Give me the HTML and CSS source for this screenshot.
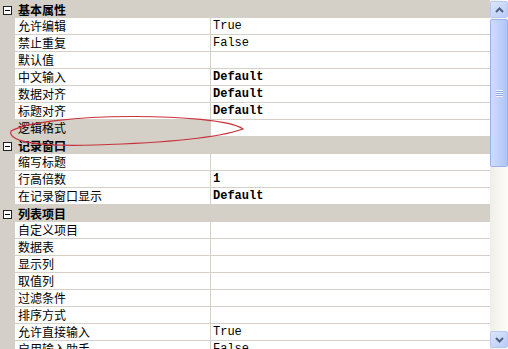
FILE: index.html
```html
<!DOCTYPE html>
<html lang="zh-CN">
<head>
  <meta charset="UTF-8" />
  <title>属性</title>
  <link rel="stylesheet" href="styles.css">
</head>
<body>
  <div class="frame">
    <div class="grid">
      <!-- 基本属性 -->
      <div class="row category"><span class="toggle"></span><span class="cat-name">基本属性</span></div>
      <div class="row"><span class="name">允许编辑</span><span class="value">True</span></div>
      <div class="row"><span class="name">禁止重复</span><span class="value">False</span></div>
      <div class="row"><span class="name">默认值</span><span class="value"></span></div>
      <div class="row"><span class="name">中文输入</span><span class="value bold">Default</span></div>
      <div class="row"><span class="name">数据对齐</span><span class="value bold">Default</span></div>
      <div class="row"><span class="name">标题对齐</span><span class="value bold">Default</span></div>
      <div class="row"><span class="name selected">逻辑格式</span><span class="value"></span></div>

      <!-- 记录窗口 -->
      <div class="row category"><span class="toggle"></span><span class="cat-name">记录窗口</span></div>
      <div class="row"><span class="name">缩写标题</span><span class="value"></span></div>
      <div class="row"><span class="name">行高倍数</span><span class="value bold">1</span></div>
      <div class="row"><span class="name">在记录窗口显示</span><span class="value bold">Default</span></div>

      <!-- 列表项目 -->
      <div class="row category"><span class="toggle"></span><span class="cat-name">列表项目</span></div>
      <div class="row"><span class="name">自定义项目</span><span class="value"></span></div>
      <div class="row"><span class="name">数据表</span><span class="value"></span></div>
      <div class="row"><span class="name">显示列</span><span class="value"></span></div>
      <div class="row"><span class="name">取值列</span><span class="value"></span></div>
      <div class="row"><span class="name">过滤条件</span><span class="value"></span></div>
      <div class="row"><span class="name">排序方式</span><span class="value"></span></div>
      <div class="row"><span class="name">允许直接输入</span><span class="value">True</span></div>
      <div class="row"><span class="name">启用输入助手</span><span class="value">False</span></div>
    </div>

    <div class="scrollbar">
      <div class="sb-btn">
        <svg width="9" height="6" viewBox="0 0 9 6"><path d="M1 5 L4.5 1.5 L8 5" fill="none" stroke="#4d6185" stroke-width="2"/></svg>
      </div>
      <div class="sb-thumb"><span class="grip"></span></div>
      <div class="sb-track"></div>
      <div class="sb-btn">
        <svg width="9" height="6" viewBox="0 0 9 6"><path d="M1 1 L4.5 4.5 L8 1" fill="none" stroke="#4d6185" stroke-width="2"/></svg>
      </div>
    </div>

    <!-- red annotation ring -->
    <svg class="mark" width="260" height="40" viewBox="0 110 260 40">
      <path d="M243 129 C218 112 45 112 11 131 C8 140 30 147 95 145 C160 143 215 139 243 129 Z"
            fill="none" stroke="#c8323c" stroke-width="1.2"/>
    </svg>
  </div>
</body>
</html>
```

FILE: styles.css
```css
body {
  margin: 0;
  background: #fff;
}
.frame {
  position: relative;
  width: 508px;
  height: 349px;
  display: flex;
  overflow: hidden;
  background: #fff;
}
.grid {
  width: 490px;
  padding-top: 1px;
  background: #d4d0c8;
}
.row {
  display: flex;
  height: 17px;
  padding-left: 15px;
}
.name, .value {
  height: 16px;
  line-height: 16px;
  background: #fff;
  border-bottom: 1px solid #d4d0c8;
  white-space: nowrap;
  overflow: hidden;
}
.name {
  width: 192px;
  padding-left: 3px;
  border-right: 1px solid #d4d0c8;
  font-family: "Noto Sans CJK SC", "Liberation Sans", sans-serif;
  font-size: 12px;
  color: #000;
}
.name.selected {
  background: #d4d0c8;
}
.value {
  flex: 1;
  padding-left: 2px;
  font-family: "Liberation Mono", monospace;
  font-size: 12px;
  color: #000;
}
.value.bold {
  font-weight: bold;
}
.category {
  padding-left: 0;
  align-items: center;
}
.toggle {
  position: relative;
  box-sizing: border-box;
  width: 9px;
  height: 9px;
  margin: 1px 6px 0 3px;
  border: 1px solid #222;
  background: #fff;
}
.toggle::after {
  content: "";
  position: absolute;
  left: 1px;
  top: 3px;
  width: 5px;
  height: 1px;
  background: #000;
}
.cat-name {
  font-family: "Noto Sans CJK SC", "Liberation Sans", sans-serif;
  font-size: 12px;
  font-weight: bold;
  line-height: 16px;
  color: #000;
}
.scrollbar {
  width: 18px;
  display: flex;
  flex-direction: column;
  padding: 1px 0 1px;
  box-sizing: border-box;
  background: linear-gradient(to right, #efeee7, #fdfdfa);
}
.sb-btn {
  box-sizing: border-box;
  height: 17px;
  display: flex;
  align-items: center;
  justify-content: center;
  border: 1px solid #b7c9f3;
  border-radius: 2px;
  background: linear-gradient(to bottom right, #dbe5fd, #b9ccf6);
}
.sb-thumb {
  box-sizing: border-box;
  height: 148px;
  margin-top: 1px;
  display: flex;
  align-items: center;
  justify-content: center;
  border: 1px solid #98b2ee;
  border-radius: 2px;
  background: linear-gradient(to right, #cfdcfd, #bccef9 60%, #b0c5f6);
}
.grip {
  width: 7px;
  height: 7px;
  background: repeating-linear-gradient(to bottom, #eef3fe 0 1px, #8faae6 1px 2px);
}
.sb-track {
  flex: 1;
}
.mark {
  position: absolute;
  left: 0;
  top: 110px;
}
```
